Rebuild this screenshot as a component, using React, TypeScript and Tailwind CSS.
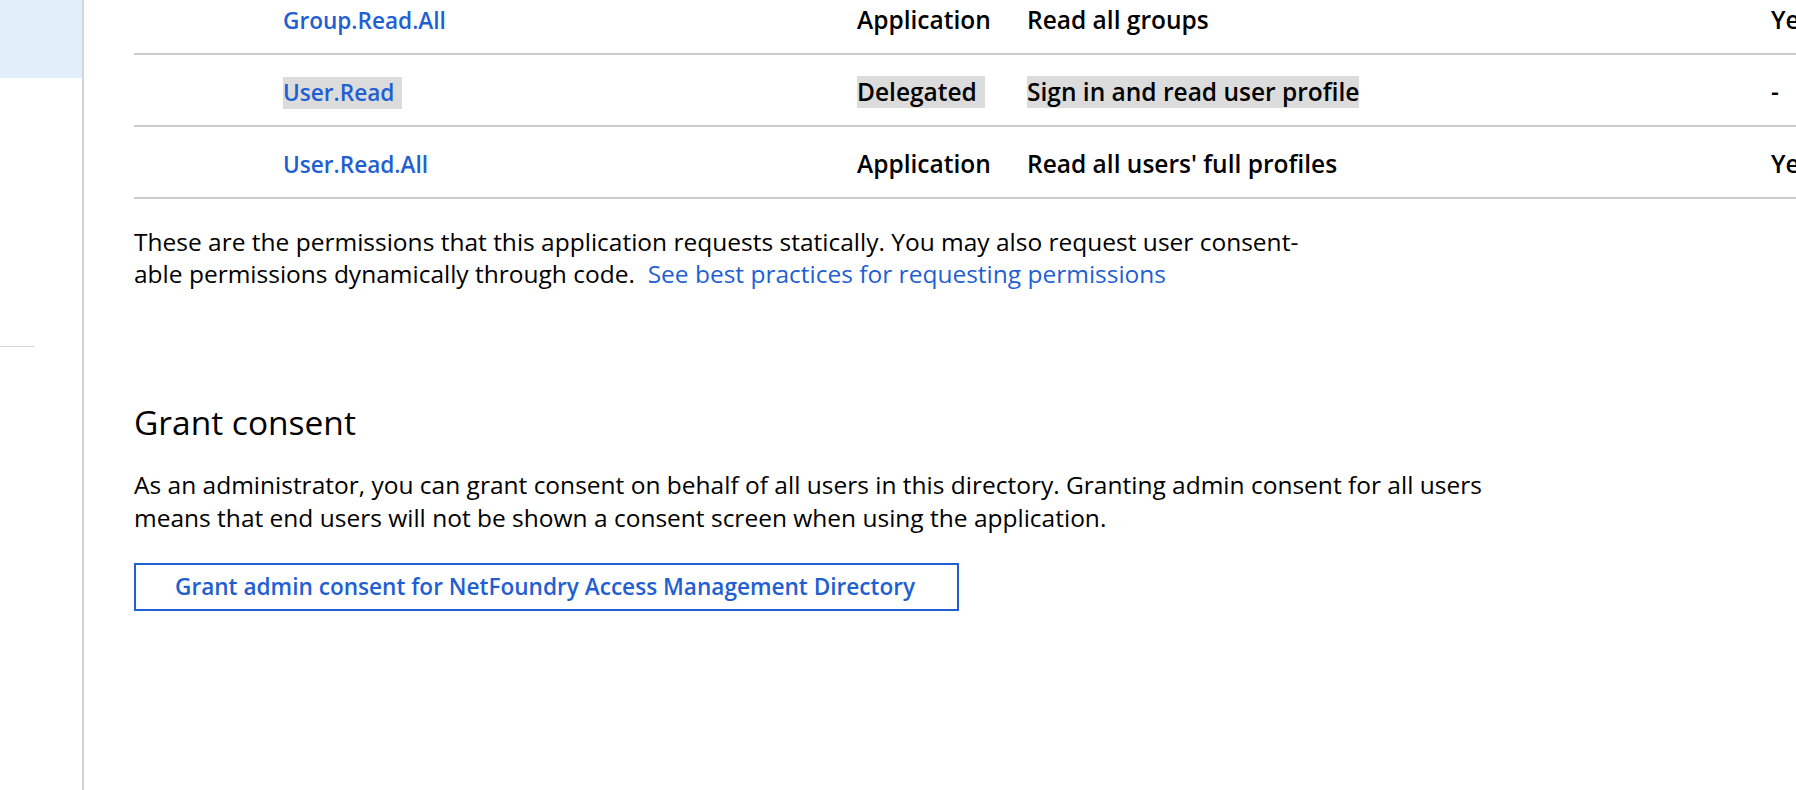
import React from "react";

const rows = [
  { name: "Group.Read.All", type: "Application", desc: "Read all groups", admin: "Yes", hl: false },
  { name: "User.Read", type: "Delegated", desc: "Sign in and read user profile", admin: "-", hl: true },
  { name: "User.Read.All", type: "Application", desc: "Read all users' full profiles", admin: "Yes", hl: false },
];

export default function App() {
  return (
    <div
      className="flex w-[1796px] h-[790px] overflow-hidden bg-white text-black"
      style={{ fontFamily: '"Open Sans", "Noto Sans", sans-serif' }}
    >
      <aside className="w-[84px] shrink-0 border-r-2 border-[#d4d4d4] flex flex-col">
        <div className="h-[78px] bg-[#e1effb]" />
        <div className="h-[268px]" />
        <div className="w-[34px] h-px bg-[#d6d6d6]" />
      </aside>
      <main className="flex-1 pl-[50px] overflow-hidden">
        <div className="-mt-[17px]">
          {rows.map((r) => (
            <div
              key={r.name}
              className="grid grid-cols-[149px_574px_170px_744px_200px] items-center h-[72px] pt-[4px] border-b-2 border-[#cbcbcb] whitespace-nowrap text-[24.5px] font-semibold"
            >
              <div />
              <div>
                <span className={`text-[#1f5fd3] text-[22.6px] leading-[32px] inline-block ${r.hl ? "bg-[#dcdcdc] pr-[8px]" : ""}`}>
                  {r.name}
                </span>
              </div>
              <div>
                <span className={`leading-[32px] inline-block ${r.hl ? "bg-[#dcdcdc] pr-[8px]" : ""}`}>{r.type}</span>
              </div>
              <div>
                <span className={`leading-[32px] inline-block ${r.hl ? "bg-[#dcdcdc]" : ""}`}>{r.desc}</span>
              </div>
              <div>{r.admin}</div>
            </div>
          ))}
        </div>
        <p className="mt-[27px] text-[24.5px] leading-[32px] w-[1400px] whitespace-nowrap">
          These are the permissions that this application requests statically. You may also request user consent-
          <br />
          able permissions dynamically through code.{"\u00a0 "}
          <a className="text-[#1f5fd3]">See best practices for requesting permissions</a>
        </p>
        <h2 className="mt-[110px] text-[33.5px] leading-[44px] font-normal">Grant consent</h2>
        <p className="mt-[24px] text-[24.5px] leading-[33px] w-[1600px] whitespace-nowrap">
          As an administrator, you can grant consent on behalf of all users in this directory. Granting admin consent for all users
          <br />
          means that end users will not be shown a consent screen when using the application.
        </p>
        <button className="mt-[29px] h-[48px] w-[825px] border-2 border-[#2160d2] text-left pl-[39px] text-[22.6px] font-semibold text-[#1f5fd3] whitespace-nowrap">
          Grant admin consent for NetFoundry Access Management Directory
        </button>
      </main>
    </div>
  );
}
